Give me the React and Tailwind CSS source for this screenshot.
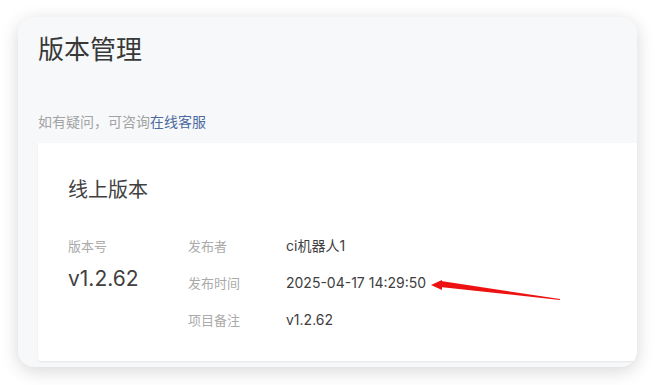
import React from "react";

const font = { fontFamily: '"Inter", "Noto Sans CJK SC", sans-serif' };

const rows = [
  ["发布者", "ci机器人1"],
  ["发布时间", "2025-04-17 14:29:50"],
  ["项目备注", "v1.2.62"],
];

export default function App() {
  return (
    <div className="w-[655px] h-[385px] bg-white pt-[17px] pl-[18px] overflow-hidden" style={font}>
      <div className="relative w-[619px] h-[350px] rounded-[16px] bg-[#f7f8fa] shadow-[0_4px_18px_rgba(0,0,0,0.16)] overflow-hidden pl-[20px] pt-[17px] flex flex-col">
        <h1 className="text-[26px] leading-[32px] text-[#383838] font-normal">版本管理</h1>

        <p className="mt-[46px] text-[14px] leading-[20px] text-[#a3a3a3]">
          如有疑问，可咨询<span className="text-[#4c6a9f]">在线客服</span>
        </p>

        {/* online version card */}
        <div className="mt-[11px] h-[218px] bg-white rounded-bl-[3px] shadow-[0_1px_2px_rgba(0,0,0,0.08)] pl-[30px] pt-[35px]">
          <h2 className="text-[20px] leading-[24px] text-[#404040]">线上版本</h2>

          <div className="mt-[34px] flex">
            <div className="w-[120px]">
              <div className="text-[13px] leading-[20px] text-[#aaa]">版本号</div>
              <div className="mt-[9px] text-[21px] leading-[28px] text-[#404040]">v1.2.62</div>
            </div>
            <div className="flex flex-col gap-[17px]">
              {rows.map(([k, v]) => (
                <div key={k} className="flex text-[13px] leading-[20px]">
                  <span className="w-[98px] text-[#aaa]">{k}</span>
                  <span className="text-[14px] text-[#404040]">{v}</span>
                </div>
              ))}
            </div>
          </div>
        </div>

        {/* red annotation arrow */}
        <svg className="absolute left-0 top-0" width="619" height="350" viewBox="0 0 619 350">
          <polygon points="415,268 423,264 542,282 542,283 422,270" fill="#ee1111" />
          <polygon points="413,268 424,263 424,273" fill="#ee1111" />
        </svg>
      </div>
    </div>
  );
}
